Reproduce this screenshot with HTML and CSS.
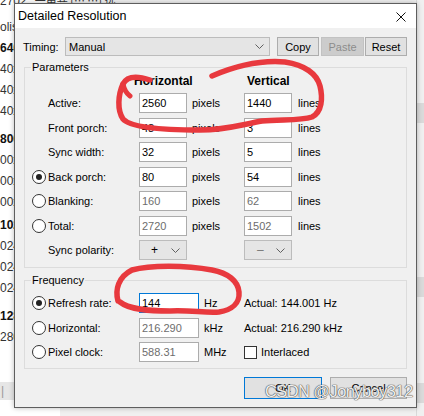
FILE: index.html
```html
<!DOCTYPE html>
<html>
<head>
<meta charset="utf-8">
<link rel="stylesheet" href="styles.css">
</head>
<body>
<div class="bgapp">
  <div class="bgleft">
    <div class="bgtopline"><span>2702</span><span class="cjk">一声共 (… …) 选</span></div>
    <div class="bgl first">olis</div>
    <div class="bgl b">640</div>
    <div class="bgl">40x</div>
    <div class="bgl">40x</div>
    <div class="bgl">40x</div>
    <div class="bgl b gap">800</div>
    <div class="bgl">00x</div>
    <div class="bgl">00x</div>
    <div class="bgl">00x</div>
    <div class="bgl b gap2">102</div>
    <div class="bgl">024</div>
    <div class="bgl">024</div>
    <div class="bgl">024</div>
    <div class="bgl b gap">128</div>
    <div class="bgl">280</div>
    <div class="bgband">|</div>
  </div>
  <div class="bgright">
    <div class="rbox r1"></div>
    <div class="rbox r2"></div>
    <div class="rbox r3"></div>
  </div>
</div>

<div class="dialog">
  <div class="titlebar">
    <span class="title">Detailed Resolution</span>
    <svg class="close" width="10" height="10" viewBox="0 0 10 10"><path d="M0.5 0.5 L9.5 9.5 M9.5 0.5 L0.5 9.5" stroke="#111" stroke-width="1" fill="none"/></svg>
  </div>
  <div class="content">
    <div class="timing">
      <span class="tlabel">Timing:</span>
      <div class="combo wide"><span>Manual</span><svg class="chev" width="9" height="5" viewBox="0 0 9 5"><path d="M0.5 0.5 L4.5 4.5 L8.5 0.5" stroke="#606060" fill="none"/></svg></div>
      <div class="btn copy">Copy</div>
      <div class="btn paste">Paste</div>
      <div class="btn reset">Reset</div>
    </div>

    <div class="group params">
      <div class="legend">Parameters</div>
      <div class="pgrid">
        <span class="hdr hh">Horizontal</span>
        <span class="hdr hv">Vertical</span>

        <span class="lbl">Active:</span>
        <div class="field">2560</div><span class="unit">pixels</span>
        <div class="field">1440</div><span class="unit u2">lines</span>

        <span class="lbl">Front porch:</span>
        <div class="field">48</div><span class="unit">pixels</span>
        <div class="field">3</div><span class="unit u2">lines</span>

        <span class="lbl">Sync width:</span>
        <div class="field">32</div><span class="unit">pixels</span>
        <div class="field">5</div><span class="unit u2">lines</span>

        <span class="radio on"></span><span class="lbl">Back porch:</span>
        <div class="field">80</div><span class="unit">pixels</span>
        <div class="field">54</div><span class="unit u2">lines</span>

        <span class="radio"></span><span class="lbl">Blanking:</span>
        <div class="field dis">160</div><span class="unit">pixels</span>
        <div class="field dis">62</div><span class="unit u2">lines</span>

        <span class="radio"></span><span class="lbl">Total:</span>
        <div class="field dis">2720</div><span class="unit">pixels</span>
        <div class="field dis">1502</div><span class="unit u2">lines</span>

        <span class="lbl">Sync polarity:</span>
        <div class="combo pol"><span>+</span><svg class="chev" width="9" height="5" viewBox="0 0 9 5"><path d="M0.5 0.5 L4.5 4.5 L8.5 0.5" stroke="#606060" fill="none"/></svg></div>
        <span></span>
        <div class="combo pol grey"><span>–</span><svg class="chev" width="9" height="5" viewBox="0 0 9 5"><path d="M0.5 0.5 L4.5 4.5 L8.5 0.5" stroke="#606060" fill="none"/></svg></div>
      </div>
    </div>

    <div class="group freq">
      <div class="legend">Frequency</div>
      <div class="fgrid">
        <span class="radio on"></span><span class="lbl">Refresh rate:</span>
        <div class="field focus">144</div><span class="unit">Hz</span>
        <span class="actual">Actual: 144.001 Hz</span>

        <span class="radio"></span><span class="lbl">Horizontal:</span>
        <div class="field dis">216.290</div><span class="unit">kHz</span>
        <span class="actual">Actual: 216.290 kHz</span>

        <span class="radio"></span><span class="lbl">Pixel clock:</span>
        <div class="field dis">588.31</div><span class="unit">MHz</span>
        <span class="check"><span class="box"></span><span>Interlaced</span></span>
      </div>
    </div>

    <div class="buttons">
      <div class="btn ok">OK</div>
      <div class="btn cancel">Cancel</div>
    </div>
  </div>
</div>

<svg class="scribble" width="424" height="416" viewBox="0 0 424 416">
  <path d="M150,80 C138,76 127,76 123,84 C118,95 117,110 123,119 C130,127 160,130 200,130 C225,130 240,125 262,121 C280,119 300,121 312,117 C322,112 323,98 320,86 C317,74 305,65 285,62 C262,60 240,64 212,76" stroke="#e8393e" stroke-width="5.5" fill="none" stroke-linecap="round" stroke-linejoin="round"/>
  <path d="M123,84 C124,89 126,93 130,96" stroke="#e8393e" stroke-width="5" fill="none" stroke-linecap="round"/>
  <path d="M118,301 C115,290 118,277 132,270 C150,265 185,265 212,270 C228,273 238,281 239,292 C240,303 232,310 219,312 C205,313 190,310 170,311 C150,311 130,310 120,302" stroke="#e8393e" stroke-width="5.5" fill="none" stroke-linecap="round" stroke-linejoin="round"/>
</svg>

<div class="wm">CSDN @Jonyboy312</div>
</body>
</html>
```

FILE: styles.css
```css
* { box-sizing: border-box; }
html, body { margin: 0; padding: 0; }
body {
  width: 424px;
  height: 416px;
  overflow: hidden;
  position: relative;
  background: #f0f0f0;
  font-family: "Liberation Sans", Arial, sans-serif;
  font-size: 11px;
  color: #000;
}

/* background application */
.bgapp {
  display: flex;
  height: 416px;
}
.bgleft {
  width: 60px;
  background: #fff;
  display: flex;
  flex-direction: column;
  color: #333;
  font-size: 12px;
  white-space: nowrap;
}
.bgtopline {
  line-height: 12px;
  height: 12px;
  margin-top: -6px;
  margin-bottom: -6px;
}
.bgtopline .cjk { margin-left: 8px; font-family: "Noto Sans CJK SC", sans-serif; font-size: 11px; }
.bgl { line-height: 21px; height: 21px; }
.bgl.first { margin-top: 16.5px; }
.bgl.b { font-weight: bold; color: #111; }
.bgl.gap { margin-top: 7px; }
.bgl.gap2 { margin-top: 2px; }
.bgband {
  margin-top: 34.5px;
  height: 18px;
  background: #e6e6e6;
  color: #999;
  line-height: 18px;
  padding-left: 1px;
}
.bgright {
  margin-left: auto;
  width: 8px;
  background: #f0f0f0;
  border-left: 1px solid #d8d8d8;
  display: flex;
  flex-direction: column;
}
.rbox { background: #dadada; height: 20px; }
.r1 { margin-top: 103px; }
.r2 { margin-top: 154px; }
.r3 { margin-top: 86px; }

/* dialog window */
.dialog {
  position: absolute;
  left: 14px;
  top: 3px;
  width: 403px;
  border: 1px solid #5e5e5e;
  background: #f0f0f0;
  box-shadow: 0 0 5px rgba(0, 0, 0, 0.28);
}
.titlebar {
  height: 24px;
  background: #fff;
  display: flex;
  align-items: center;
  justify-content: space-between;
  padding: 0 10px 0 3px;
}
.title { font-size: 12.5px; color: #000; }
.close { display: block; margin-top: 1px; }

.content { padding: 9px 9px 8px 9px; }

.timing {
  display: flex;
  align-items: center;
  height: 19px;
}
.tlabel { width: 42px; margin-left: -1px; }
.combo {
  display: flex;
  align-items: center;
  justify-content: space-between;
  background: #e5e5e5;
  border: 1px solid #bcbcbc;
}
.combo.wide { width: 205px; height: 19px; padding: 0 5px 0 3px; }
.chev { display: block; }
.btn {
  display: flex;
  align-items: center;
  justify-content: center;
  background: #e1e1e1;
  border: 1px solid #adadad;
  height: 19px;
}
.copy { width: 42px; margin-left: 7px; }
.paste { width: 43px; margin-left: 2px; background: #cccccc; border-color: #c2c2c2; color: #8c8c8c; }
.reset { width: 42px; margin-left: 1px; }

.group {
  border: 1px solid #dcdcdc;
}
.params { margin-top: 11px; }
.freq { margin-top: 12px; }
.legend {
  width: fit-content;
  margin: -8px 0 0 6px;
  padding: 0 1px;
  background: #f0f0f0;
  line-height: 14px;
  height: 14px;
}

.pgrid {
  display: grid;
  grid-template-columns: 23px 91px 48px 57px 48px 1fr;
  grid-template-rows: 14.5px;
  grid-auto-rows: 20px;
  row-gap: 4.5px;
  align-items: center;
  padding-bottom: 7px;
}
.hdr {
  font-weight: bold;
  font-size: 12px;
  white-space: nowrap;
  line-height: 14px;
}
.hh { grid-column: 3 / span 2; margin-left: -5px; }
.hv { grid-column: 5 / span 2; margin-left: 3px; }
.lbl { grid-column: 2; white-space: nowrap; }
.radio {
  grid-column: 1;
  width: 14px;
  height: 14px;
  margin-left: 7px;
  border: 1px solid #333;
  border-radius: 50%;
  background: #fff;
  display: flex;
  align-items: center;
  justify-content: center;
}
.radio.on::after {
  content: "";
  width: 6px;
  height: 6px;
  border-radius: 50%;
  background: #222;
}
.field {
  height: 20px;
  background: #fff;
  border: 1px solid #acacac;
  padding: 0 2px;
  line-height: 18px;
  white-space: nowrap;
}
.field.dis { color: #6d6d6d; }
.field.focus { border-color: #0078d7; }
.unit { padding-left: 5px; white-space: nowrap; }
.unit.u2 { padding-left: 6px; }
.combo.pol { height: 20px; padding: 0 6px 0 11px; font-size: 12px; }
.combo.pol.grey { color: #777; padding-left: 12px; }

.fgrid {
  display: grid;
  grid-template-columns: 23px 91px 60px 45px 1fr;
  grid-auto-rows: 20px;
  row-gap: 4.5px;
  align-items: center;
  margin-top: 6px;
  padding-bottom: 6px;
}
.actual { white-space: nowrap; }
.check { display: flex; align-items: center; gap: 4px; }
.check .box {
  width: 13px;
  height: 13px;
  border: 1px solid #333;
  background: #fff;
}

.buttons {
  display: flex;
  justify-content: flex-end;
  gap: 8px;
  margin-top: 8px;
}
.ok { width: 78px; height: 22px; border-color: #0078d7; }
.cancel { width: 77px; height: 22px; }

/* overlays */
.scribble {
  position: absolute;
  left: 0;
  top: 0;
  pointer-events: none;
}
.wm {
  position: absolute;
  left: 265px;
  top: 382px;
  font-size: 16.5px;
  letter-spacing: -0.6px;
  color: rgba(255, 255, 255, 0.92);
  text-shadow: 0 0 1px #555, 0 0 1px #555, 0 0 1px #555;
  white-space: nowrap;
}
```
